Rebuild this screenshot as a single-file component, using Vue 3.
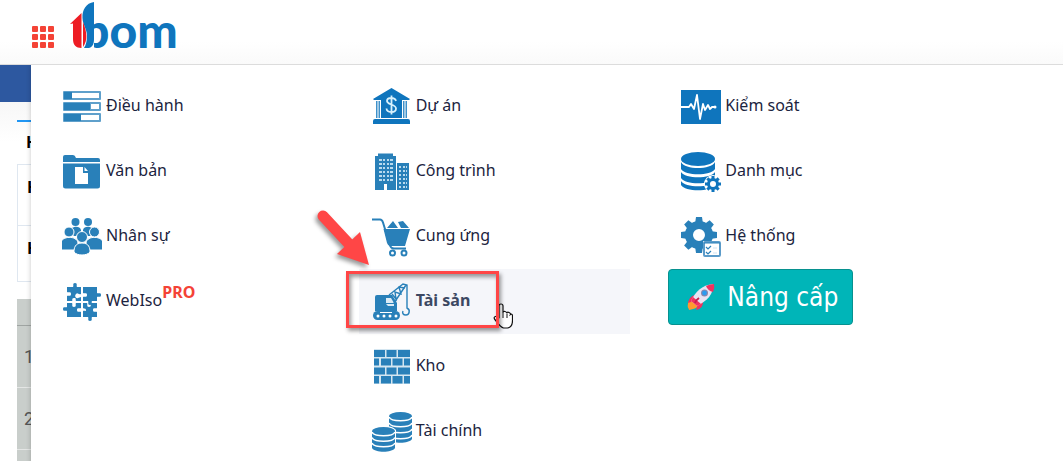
<script setup>
const columns = [
  [
    { label: 'Điều hành', icon: 'bars' },
    { label: 'Văn bản', icon: 'folder' },
    { label: 'Nhân sự', icon: 'people' },
    { label: 'WebIso', icon: 'puzzle', tag: 'PRO' },
  ],
  [
    { label: 'Dự án', icon: 'bank' },
    { label: 'Công trình', icon: 'building' },
    { label: 'Cung ứng', icon: 'cart' },
    { label: 'Tài sản', icon: 'crane', active: true },
    { label: 'Kho', icon: 'bricks' },
    { label: 'Tài chính', icon: 'coins' },
  ],
  [
    { label: 'Kiểm soát', icon: 'pulse' },
    { label: 'Danh mục', icon: 'database' },
    { label: 'Hệ thống', icon: 'settings' },
  ],
]
const teeth = [0, 45, 90, 135, 180, 225, 270, 315]
const cells = [0, 1, 2]
const windowRows = [7, 11, 15, 19, 23, 27]
</script>

<template>
  <div class="page">
    <header class="header">
      <button class="apps" type="button" aria-label="Menu">
        <svg viewBox="0 0 22 22" fill="#f44336">
          <template v-for="r in cells" :key="r">
            <rect v-for="c in cells" :key="c" :x="c * 8" :y="r * 8" width="6" height="6" rx="1" />
          </template>
        </svg>
      </button>
      <a class="logo" href="#" aria-label="1bom">
        <svg viewBox="0 0 120 60">
          <text class="logo-text" x="12" y="47">bom</text>
          <path d="M11 0h13v47H11z" fill="#fff" />
          <path d="M24 1C16 2 12 9 12.500 17c.3 7 4 10 4.500 17 .2 5-1 10-3 13h5c4-1 5-5 5-9V1z" fill="#0f75bd" />
          <path d="M0 23 11.500 12v35C6 47 3 44 3 38V22.500z" fill="#ed1c24" />
          <path d="M13 21c4 10 5 18 0 25z" fill="#ed1c24" />
        </svg>
      </a>
    </header>

    <div class="body">
      <div class="band"></div>
      <main class="content">
        <div class="tab">H</div>
        <div class="card">
          <div class="card-row">H</div>
          <div class="card-row">H</div>
        </div>
        <table class="grid">
          <thead><tr><th></th></tr></thead>
          <tbody>
            <tr><td>1</td></tr>
            <tr><td>2</td></tr>
            <tr><td></td></tr>
          </tbody>
        </table>
      </main>

      <nav class="menu">
        <div v-for="(col, i) in columns" :key="i" class="column">
          <a v-for="item in col" :key="item.label" href="#" class="item" :class="{ active: item.active }">
            <svg class="icon" viewBox="0 0 40 40" fill="currentColor" :class="{ deep: ['bank', 'pulse', 'database'].includes(item.icon) }">
              <g v-if="item.icon === 'bars'">
                <rect x="1" y="4" width="38" height="9" rx="1" opacity=".75" /><path d="M2 5h8v7H2z" /><path d="M10 6h27v5H10z" fill="#fff" />
                <rect x="1" y="15" width="38" height="9" rx="1" opacity=".75" /><path d="M2 16h26v7H2z" /><path d="M29 17h8v5h-8z" fill="#fff" />
                <rect x="1" y="26" width="38" height="9" rx="1" opacity=".75" /><path d="M2 27h17v7H2z" /><path d="M19 28h18v5H19z" fill="#fff" />
              </g>
              <g v-else-if="item.icon === 'folder'">
                <path d="M1 10V5q0-2 2-2h8q2 0 3 3h22q2 0 2 2v2z" />
                <path d="M1 11.500h37V34q0 2.500-2.500 2.500h-32Q1 36.500 1 34z" />
                <path d="M13 15h8v6h5v11H13zM22.500 15l3.500 4h-3.500z" fill="#fff" />
              </g>
              <g v-else-if="item.icon === 'people'">
                <circle cx="13.500" cy="5" r="4" /><circle cx="26" cy="5" r="4" />
                <path d="M8 14c1-5 10-6 11-1v6h-7zM32 14c-1-5-10-6-11-1v6h7z" />
                <g stroke="#fff" stroke-width="1">
                  <path d="M-1 33v-7c0-7 16-8 17 0v7zM41 33v-7c0-7-16-8-17 0v7z" />
                  <circle cx="7" cy="15" r="5" /><circle cx="32.500" cy="15" r="5" />
                  <path d="M12 35c0-4 1-9 8-9s8 5 8 9c-3 4-13 4-16 0z" />
                  <circle cx="20" cy="20" r="5.500" />
                </g>
              </g>
              <g v-else-if="item.icon === 'puzzle'">
                <path d="M5 5h6c1-1-1-4 2-4s1 3 2 4h4v7c-3 1-3-2-5 0s0 5 2 4l3-1v4h-5c-1-1 1-3-2-3s-1 3-2 3H5v-5c1-1 4 1 4-2s-3-1-4-2z" />
                <path d="M21 5h14v6c1 1 4-1 4 2s-3 1-4 2v4h-5c-1 1 1 4-2 4s-1-3-2-4h-5v-4c1-1 4 1 4-2s-3-1-4-2z" />
                <path d="M5 21h5c1 1-1 4 2 4s1-3 2-4h5v5c-1 1-4-1-4 2s3 1 4 2v5H5v-6c-1-1-4 1-4-2s3-1 4-2z" />
                <path d="M21 21h4c1 1-1 4 2 4s1-3 2-4h6v5c-1 1-4-1-4 2s3 1 4 2v5h-5c-1 1 1 4-2 4s-1-3-2-4h-5v-6c1-1 3 1 3-1s-2-1-3-2z" />
              </g>
              <g v-else-if="item.icon === 'bank'">
                <path d="M1 12 19.500 1 38 12l-1 1H2zM9 12h21v19H9zM1 34q0-2 2-2h33q2 0 2 2v3H1z" />
                <path d="M4 14h1.500v17H4zM6.500 14H8v17H6.500zM31 14h1.500v17H31zM33.500 14H35v17h-1.500z" opacity=".8" />
                <path d="M24 14c-1-4-9-4-9 0s9 3 9 7.500-9 5-9.500 0M19.500 8.500v19" fill="none" stroke="#d8f1fc" stroke-width="1.800" />
              </g>
              <g v-else-if="item.icon === 'building'">
                <path d="M6 1.500h15V4h3v34h-9v-6h-3v6H3V4h3zM26 11h11v27H25V11z" />
                <g v-for="y in windowRows" :key="y" fill="#b9daee">
                  <path :d="`M7 ${y}h3v2H7zM11 ${y}h2v2h-2zM15 ${y}h2v2h-2zM18 ${y}h3v2h-3z`" />
                  <path :d="`M27 ${y + 7}h2v2h-2zM31 ${y + 7}h2v2h-2zM34 ${y + 7}h1v2h-1z`" />
                </g>
              </g>
              <g v-else-if="item.icon === 'cart'">
                <path d="M0 2.500h8q2 0 3 3l7 23q1 3 4 3h12" fill="none" stroke="currentColor" stroke-width="2" />
                <path d="M11.500 12H38l-5 17H18q-2 0-3-3zM15 11l6-7 5 7zM26 5l5-1 6 7h-8z" />
                <g fill="#fff" stroke="currentColor" stroke-width="2"><circle cx="20.500" cy="36" r="2.500" /><circle cx="32" cy="36" r="2.500" /></g>
              </g>
              <g v-else-if="item.icon === 'crane'">
                <path d="M3 15q0-2 2-2h15l5 8v8H3z" />
                <path d="M14 16h5l3 5h-8zM14 22h8v2h-6z" fill="#dcebf5" />
                <g fill="none" stroke="currentColor" stroke-width="1.400">
                  <path d="M17 13 31 2l4 1v19M22 21 34 3M20 12l4 5-1-7 6 2-2-7 6 1M35 22v4c4 2 2 7-1 7s-4-2-3-4" />
                </g>
                <rect x="1" y="29" width="27" height="9" rx="4.500" />
                <path d="M8 30h12v1H8z" fill="#fff" />
                <g fill="#fff"><circle cx="6" cy="34" r="1.500" /><circle cx="12" cy="34" r="1.500" /><circle cx="18" cy="34" r="1.500" /><circle cx="24" cy="34" r="1.500" /></g>
              </g>
              <g v-else-if="item.icon === 'bricks'">
                <rect x="2" y="2" width="36" height="35" opacity=".2" />
                <path d="M2 3h11v7H2zM14.500 3h10v7h-10zM26 3h12v7H26zM2 11.500h5v7H2zM9 11.500h10v7H9zM20.500 11.500h10v7h-10zM32 11.500h6v7h-6zM2 20.500h11v7H2zM14.500 20.500h10v7h-10zM26 20.500h12v7H26zM2 29h5v7.500H2zM9 29h10v7.500H9zM20.500 29h10v7.500h-10zM32 29h6v7.500h-6z" />
              </g>
              <g v-else-if="item.icon === 'coins'">
                <path d="M17 4v23c3 5 20 5 23 0V4z" /><ellipse cx="28.500" cy="4" rx="11.500" ry="4" />
                <path d="M17 5c2 5 21 5 23 0M17 11c2 5 21 5 23 0M17 17c2 5 21 5 23 0M17 23c2 5 21 5 23 0" fill="none" stroke="#fff" stroke-width="1.500" />
                <path d="M-1 18c4-6 20-6 25 0v21H-1z" fill="#fff" />
                <path d="M0 19v17c3 5 20 5 23 0V19z" /><ellipse cx="11.500" cy="19" rx="11.500" ry="4" />
                <path d="M0 20c2 5 21 5 23 0M0 25.500c2 5 21 5 23 0M0 31c2 5 21 5 23 0" fill="none" stroke="#fff" stroke-width="1.500" />
              </g>
              <g v-else-if="item.icon === 'pulse'">
                <path d="M0 3h40v34H0z" />
                <path d="M0 20h8l2-3 3 5 3-14 3 24 3-15 2 6 3-5 2 4 2-2h2" fill="none" stroke="#fff" stroke-width="1.800" stroke-linejoin="round" />
                <circle cx="34" cy="20" r="1.500" fill="#fff" />
              </g>
              <g v-else-if="item.icon === 'database'">
                <ellipse cx="17" cy="7" rx="17" ry="7" />
                <path d="M0 10c4 8 30 8 34 0v7c-4 7-30 7-34 0zM0 20c4 7 30 7 34 0v6c-4 7-30 7-34 0zM0 29c4 7 30 7 34 0v4c-4 7-30 7-34 0z" />
                <circle cx="32" cy="32" r="9" fill="#fff" />
                <g transform="translate(32 32)">
                  <rect v-for="a in teeth" :key="a" x="-1.500" y="-8" width="3" height="5" :transform="`rotate(${a})`" />
                  <circle r="4.500" fill="#fff" stroke="currentColor" stroke-width="3" />
                </g>
              </g>
              <g v-else>
                <g transform="translate(18 18)">
                  <path v-for="a in teeth" :key="a" d="M-4-11-3-18H3L4-11z" :transform="`rotate(${a})`" />
                  <circle r="10" fill="#fff" stroke="currentColor" stroke-width="8" />
                </g>
                <rect x="22" y="24" width="18" height="16" fill="#fff" />
                <rect x="23" y="25" width="16" height="14" rx="1" fill="#fff" stroke="#5b9bc9" stroke-width="2" />
                <path d="M23 26h16M25 30l2 2 3-3M25 35l2 2 3-3" fill="none" stroke="currentColor" stroke-width="1.200" />
                <path d="M32 31h4M32 36h4" stroke="#cfe3f1" />
              </g>
            </svg>
            <span class="label">{{ item.label }}<sup v-if="item.tag">{{ item.tag }}</sup></span>
          </a>
          <button v-if="i === 2" class="upgrade" type="button">
            <svg class="rocket" viewBox="0 0 28 28">
              <path d="M1 21c0-3 3-5 6-5l5 4c0 4-4 6-10 7 0-2-2-2-1-6z" fill="#ff9a2e" />
              <path d="M9 12c-4 0-7 3-8 8l6-2zM16 19c0 4-2 7-7 8l2-6z" fill="#f0325f" />
              <path d="M4 18C8 9 15 2 26 1c1 10-6 17-16 22z" fill="#e9e3f2" />
              <path d="M19 3q4-2 8-2 1 4-1 8-5-1-7-6z" fill="#f0325f" />
              <path d="m4 18 2-4 8 7-4 2z" fill="#f0325f" />
              <circle cx="17.500" cy="10" r="3.500" fill="#8d86aa" /><circle cx="17.500" cy="10" r="2.400" fill="#2d9bf0" />
              <path d="M12 15q-3 2-4 5" stroke="#c61f4c" stroke-width="2" fill="none" />
            </svg>
            <span>Nâng cấp</span>
          </button>
        </div>
      </nav>
    </div>

    <svg class="cursor" viewBox="0 0 20 26" aria-hidden="true">
      <path d="M6 15V3q0-2 2-2t2 2v7q0-2 2-1.500t2 2q0-2 2-1t1.500 2q1.500-1 2 1v5c0 5-2 7-5 7.500h-4C7 24 5 20 1.500 16q-1-2 1-2.500t3.500 2" fill="#fff" stroke="#111" stroke-width="1.200" />
      <path d="M10 10v5M14 11v4" stroke="#111" />
    </svg>
    <div class="callout"></div>
    <svg class="arrow" viewBox="0 0 60 64" aria-hidden="true">
      <path d="m10 10 27 29" stroke="#ff4646" stroke-width="11" stroke-linecap="round" />
      <path d="m47 26 9 33-32-11z" fill="#ff4646" />
    </svg>
  </div>
</template>

<style>
html, body { margin: 0; overflow: hidden; background: #fff; }
</style>

<style scoped>
.page { position: relative; height: 100vh; overflow: hidden; font-family: "Noto Sans", "Open Sans", sans-serif; font-size: 16px; color: #1c2440; display: flex; flex-direction: column; }
.page * { box-sizing: border-box; }
.header { flex: none; height: 65px; padding-left: 32px; display: flex; align-items: flex-start; gap: 16px; border-bottom: 1px solid #dcdcdc; background: linear-gradient(#fff 65%, #fafafa); }
.apps { width: 22px; height: 22px; margin-top: 26px; padding: 0; border: 0; background: none; }
.apps svg, .logo svg { display: block; width: 100%; }
.logo { width: 120px; margin: 1px 0 0; }
.logo-text { font-family: "Lato", sans-serif; font-size: 48px; font-weight: 900; fill: #0f75bd; }
.body { flex: 1; position: relative; }
.band { height: 37px; background: #2d58a0; }
.content { padding: 18px 0 0 17px; background: linear-gradient(#f7f7f7, #fff 40px); color: #000; font-weight: 700; }
.tab { height: 44px; padding: 8px 9px; border-top: 2px solid #2196f3; line-height: 24px; }
.card { border: 1px solid #dfe7f0; }
.card-row { height: 56px; padding: 10px 9px; line-height: 24px; }
.card-row:first-child { height: 60px; }
.card-row + .card-row { border-top: 1px solid #dfe7f0; }
.grid { width: 100%; margin-top: 17px; border-collapse: collapse; background: #c9cecb; color: #555; font: 18px Roboto, sans-serif; }
.grid th { height: 26px; border-bottom: 1px solid #9fa4a2; }
.grid td { height: 62px; padding: 0 7px; border-bottom: 1px solid #e4e6e5; }
.menu { position: absolute; top: 0; right: 0; bottom: 0; left: 31px; padding: 9px 123px 0 18px; display: grid; grid-template-columns: repeat(3, 1fr); gap: 38px; align-items: start; background: #fff; box-shadow: 0 0 5px rgba(0, 0, 0, .22); clip-path: inset(0 0 0 -8px); }
.item { height: 65px; padding: 0 13px; display: flex; align-items: center; gap: 4px; color: #1c2440; text-decoration: none; }
.item.active { background: #f5f6fa; color: #3c4862; font-weight: 700; }
.icon { flex: none; width: 40px; height: 40px; color: #2980b9; }
.icon.deep { color: #0f75bd; }
.label { line-height: 24px; padding-bottom: 3px; white-space: nowrap; }
sup { font-size: 16px; line-height: 0; font-weight: 700; color: #f44336; vertical-align: 8px; }
.upgrade { height: 56px; padding: 0 14px 0 18px; display: flex; align-items: center; gap: 12px; border: 1px solid #07918f; border-radius: 4px; background: #00b5b8; color: #fff; font: 26px "DejaVu Sans Condensed", "DejaVu Sans", sans-serif; white-space: nowrap; }
.rocket { width: 28px; height: 28px; }
.cursor { position: absolute; left: 493px; top: 303px; width: 20px; height: 26px; }
.callout { position: absolute; left: 346px; top: 271px; width: 153px; height: 57px; border: 3px solid #ff4646; box-shadow: 2px 3px 4px rgba(0, 0, 0, .4), inset 2px 3px 4px rgba(0, 0, 0, .4); }
.arrow { position: absolute; left: 313px; top: 206px; width: 60px; height: 64px; filter: drop-shadow(-2px 3px 2px rgba(0, 0, 0, .4)); }
</style>
